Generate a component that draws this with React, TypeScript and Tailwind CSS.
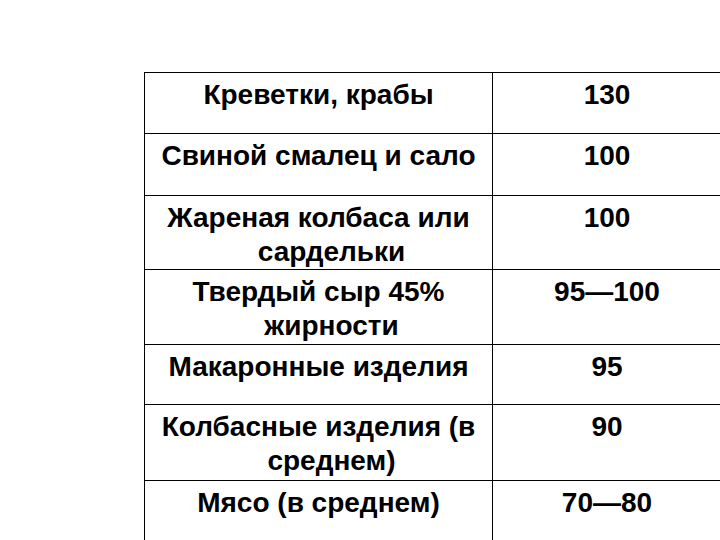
import React from "react";

const rows: { name: string[]; value: string; h: string }[] = [
  { name: ["Креветки, крабы"], value: "130", h: "h-[61px]" },
  { name: ["Свиной смалец и сало"], value: "100", h: "h-[62px]" },
  { name: ["Жареная колбаса или", "сардельки"], value: "100", h: "h-[74px]" },
  { name: ["Твердый сыр 45%", "жирности"], value: "95—100", h: "h-[75px]" },
  { name: ["Макаронные изделия"], value: "95", h: "h-[60px]" },
  { name: ["Колбасные изделия (в", "среднем)"], value: "90", h: "h-[76px]" },
  { name: ["Мясо (в среднем)"], value: "70—80", h: "h-[80px]" },
];

export default function App() {
  return (
    <div
      className="w-[720px] h-[540px] overflow-hidden bg-white pt-[72px] pl-[144px] text-black"
      style={{ fontFamily: '"Liberation Sans", Arial, sans-serif' }}
    >
      <div className="grid grid-cols-[348px_228px] border-t border-l border-black">
        {rows.map((r, i) => (
          <React.Fragment key={i}>
            <div
              className={`${r.h} border-r border-b border-black px-[7px] pt-[5px] text-center text-[28px] font-bold leading-[33.6px]`}
            >
              {r.name.map((l, j) => (
                <div key={j} className={j > 0 ? "whitespace-nowrap pl-[26px]" : "whitespace-nowrap"}>
                  {l}
                </div>
              ))}
            </div>
            <div
              className={`${r.h} border-b border-black px-[7px] pt-[5px] text-center text-[28px] font-bold leading-[33.6px]`}
            >
              {r.value}
            </div>
          </React.Fragment>
        ))}
      </div>
    </div>
  );
}
